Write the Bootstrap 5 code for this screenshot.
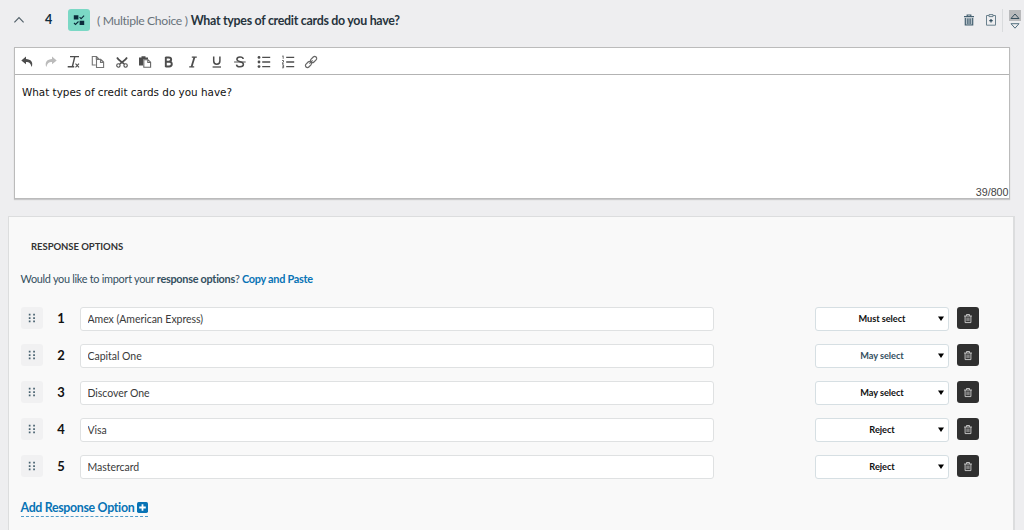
<!DOCTYPE html>
<html lang="en">
<head>
<meta charset="utf-8">
<meta name="viewport" content="width=device-width, initial-scale=1">
<title>Question editor</title>
<link href="https://cdn.jsdelivr.net/npm/bootstrap@5.3.0/dist/css/bootstrap.min.css" rel="stylesheet">
<style>
body{background:#eeeef0;font-family:Lato,"Open Sans",sans-serif;font-size:11px;line-height:16px;color:#34505f;height:530px;overflow:hidden}
svg{display:block;flex:none}
.q-head{height:47px;padding:0 3px 7px 13px}
.q-num{width:12px;margin-left:17.5px;font-size:12.5px;font-weight:700;color:#0f2d3e;text-align:center}
.q-type{width:22px;height:22px;margin-left:13px;border-radius:3px;background:#7bd8c5}
.q-kind{margin-left:7.500px;padding-top:1px;font-size:12.2px;letter-spacing:-.34px;color:#69737b;white-space:nowrap}
.q-title{margin-left:3px;padding-top:1px;font-size:12.4px;letter-spacing:-.28px;font-weight:700;color:#27343d;white-space:nowrap}
.q-sep{width:1px;height:23px;margin:0 6px 0 3px;background:#d9dbdd}
.q-up{width:12px;height:11px;background:#b9babc}
.editor{height:152px;margin:0 14px;border:1px solid #bbb;box-shadow:0 1px 1px #c8c8ca;background:#fff}
.tools{height:27px;padding:1px 0 0 5px;border-bottom:1px solid #b3b3b3;color:#4d4d4d}
.tools svg{margin-right:9.7px}
.entry{height:123px;padding:9px 7px 0;font-family:"DejaVu Sans",Verdana,sans-serif;font-size:10.4px;color:#111}
.counter{font-family:"Liberation Sans",Arial,sans-serif;font-size:10.7px;line-height:12px;color:#444;margin-right:-6.5px}
.panel{height:330px;margin:17px 9.5px 0 8px;padding:22px 30px 0 11.5px;border:1px solid #dcddde;border-right-width:2px;background:#f9f9f9}
.p-title{margin-left:10.5px;font-size:9.5px;letter-spacing:-.05px;font-weight:700;color:#333;line-height:16px}
.p-import{margin:16px 0 20px;height:16px;font-size:10.9px;letter-spacing:-.285px;white-space:nowrap}
.p-link{color:#0873b5;font-weight:700;text-decoration:none}
.opt{height:37px}
.grip{width:22px;height:22px;border-radius:3px;background:#f1f1f2;color:#47616f}
.opt-num{width:37px;line-height:22px;font-size:13px;font-weight:700;color:#111;text-align:center}
.opt .form-control{width:634px;height:24px;padding:0 7px 1px;font-size:10.5px;letter-spacing:-.03px;color:#3a3a3a;border:1px solid #dfe1e2;border-radius:3px;background:#fff}
.pick{width:134px;height:24px;margin-left:101px;padding:0 4px 1px 11px;border:1px solid #d6dfe3;border-radius:3px;background:#fff;color:#111;font-size:9.2px;letter-spacing:-.05px;font-weight:700}
.pick span{flex:1;text-align:center}
.pick.soft span{color:#34505f}
.del{width:22px;height:22px;margin-left:8px;border-radius:3px;background:#303030;color:#ddd;border:0;padding:0}
.add{margin-top:7px;color:#0873b5;font-size:12.4px;letter-spacing:-.33px;font-weight:700;line-height:17px;text-decoration:none;border-bottom:1px dashed #4f9ccb}
.add svg{margin-left:2.5px}
</style>
</head>
<body>
<svg width="0" height="0" class="position-absolute" aria-hidden="true">
  <symbol id="trash" viewBox="0 0 12 12"><g fill="none" stroke="currentColor"><path d="M1.3 3h9.4M4.2 2.8V1.2h3.6v1.6M2.5 3v7.9h7V3"/><path d="M4.7 4.8v4.4M6 4.8v4.4M7.3 4.8v4.4" stroke-width=".7"/></g></symbol>
  <symbol id="grip" viewBox="0 0 8 10"><path fill="currentColor" d="M.8.8h1.700v1.700H.8zM5.200.8h1.700v1.700H5.200zM.8 4.200h1.700v1.700H.8zM5.200 4.200h1.700v1.700H5.200zM.8 7.600h1.700v1.700H.8zM5.200 7.600h1.700v1.700H5.200z"/></symbol>
</svg>

<header class="q-head d-flex align-items-center">
  <svg width="12" height="8" viewBox="0 0 12 8" fill="none" stroke="#53616a" stroke-width="1.2"><path d="M1.400 6.400L6 1.700l4.600 4.700"/></svg>
  <span class="q-num">4</span>
  <span class="q-type d-flex align-items-center justify-content-center">
    <svg width="12" height="12" viewBox="0 0 12 12"><path fill="#0b2b3b" d="M.8 1.200h4.600v4.200H.8zM6.600 6.800h4.600v4.200H6.600z"/><path d="M6.600 3.200l1.500 1.500 3-3M1 9l1.500 1.500 3-3" fill="none" stroke="#0b2b3b" stroke-width="1.100"/></svg>
  </span>
  <span class="q-kind">( Multiple Choice )</span>
  <span class="q-title">What types of credit cards do you have?</span>
  <div class="ms-auto d-flex align-items-center">
    <svg width="12" height="12" viewBox="0 0 12 12" fill="none" stroke="#456071"><path d="M1 2.700h10M4.200 2.500V1h3.600v1.500" stroke-width="1.200"/><path d="M2.300 4v7h7.400V4" fill="#b5c1c9" stroke-width="1.200"/><path d="M4.600 4.500V10M6 4.500V10M7.400 4.500V10" stroke-width=".8"/></svg>
    <svg class="ms-2" width="16" height="12" viewBox="0 0 16 12" fill="none" stroke="#6b818e"><path d="M6 1.500H3.500v9.700h9V1.500H10"/><path d="M6 .6h4v2H6z"/><path d="M8 5v3.400M6.300 6.700h3.400" stroke="#2f4d5e" stroke-width="1.200"/></svg>
    <span class="q-sep"></span>
    <div>
      <div class="q-up d-flex align-items-center justify-content-center"><svg width="10" height="8" viewBox="0 0 10 8" fill="none" stroke="#38505e"><path d="M1 6.500L5 2l4 4.500z"/></svg></div>
      <svg class="mx-auto" width="10" height="9" viewBox="0 -2 10 9" fill="none" stroke="#53707f"><path d="M1 .7L5 5.200 9 .7z"/></svg>
    </div>
  </div>
</header>

<section class="editor">
  <div class="tools d-flex align-items-center">
    <svg width="14" height="14" viewBox="0 0 14 14"><path fill="currentColor" d="M6 1.500L1.300 5.400 6 9.300V7c3.200 0 4.600 1 5.600 5.100C13.700 7.200 10.700 4 6 3.900z"/></svg>
    <svg width="14" height="14" viewBox="0 0 14 14"><path fill="#bbb" d="M8 1.500l4.700 3.900L8 9.300V7c-3.200 0-4.600 1-5.600 5.100C.3 7.200 3.300 4 8 3.900z"/></svg>
    <svg width="14" height="14" viewBox="0 0 14 14" fill="none" stroke="currentColor"><path d="M3 1.600h9M7.800 1.600L5.400 11.500M.7 11.800h6.500" stroke-width="1.400"/><path d="M8.500 8.700l3.500 3.600M12 8.700L8.500 12.300" stroke-width="1.100"/></svg>
    <svg width="14" height="14" viewBox="0 0 14 14" fill="none" stroke="#757575" stroke-width="1.100"><path d="M4.800 10H1.300V1.500h4.200l2.300 2.400M5.300 1.500V4h2"/><path d="M5.500 4.400h4.200l2.900 2.700v5.400H5.500zM9.500 4.600v2.800h3"/></svg>
    <svg width="14" height="14" viewBox="0 0 14 14" fill="none" stroke="currentColor"><path d="M2 2.500c1.500 3 4.500 3.800 7.200 6.500M12 2.500c-1.500 3-4.500 3.800-7.200 6.500" stroke-width="1.700"/><circle cx="3.400" cy="10.500" r="1.700" stroke-width="1.100"/><circle cx="10.600" cy="10.500" r="1.700" stroke-width="1.100"/></svg>
    <svg width="14" height="14" viewBox="0 0 14 14"><path fill="currentColor" d="M1 2.500h2.500V1.200h4v1.300H10v2H5v6H1z"/><path d="M5.800 4.800H10l2.600 2.400v5.100H5.800zM9.800 5v2.500h2.500" fill="#fff" stroke="#666" stroke-width="1.100"/></svg>
    <svg width="14" height="14" viewBox="0 0 14 14" fill="none" stroke="currentColor" stroke-width="1.900"><path d="M3.500 2.500h3.200c3.300 0 3.300 4.200 0 4.200H3.500m0 0h3.600c3.600 0 3.600 4.800 0 4.800H3.500M3.800 2v10"/></svg>
    <svg width="14" height="14" viewBox="0 0 14 14" fill="none" stroke="currentColor"><path d="M5.800 2.100h5M3.200 11.900h5" stroke-width="1.300"/><path d="M8.500 2.100l-3 9.800" stroke-width="1.800"/></svg>
    <svg width="14" height="14" viewBox="0 0 14 14" fill="none" stroke="currentColor"><path d="M3.700 1.500v4.600c0 4.200 6.200 4.200 6.200 0V1.500" stroke-width="1.500"/><path d="M2.600 12h8.400" stroke-width="1.300"/></svg>
    <svg width="14" height="14" viewBox="0 0 14 14" fill="none" stroke="currentColor"><path d="M10.200 4C9.900 1.200 3.900 1.200 3.900 4.300c0 3.100 6.500 1.700 6.500 5 0 3.400-6.600 3.300-6.900.3" stroke-width="1.500"/><path d="M1.100 7h11.600"/></svg>
    <svg width="14" height="14" viewBox="0 0 14 14" fill="none" stroke="currentColor"><path d="M5.200 2.400h8M5.200 7h8M5.200 11.600h8" stroke-width="1.400"/><g fill="currentColor" stroke="none"><circle cx="2" cy="2.400" r="1.400"/><circle cx="2" cy="7" r="1.400"/><circle cx="2" cy="11.600" r="1.400"/></g></svg>
    <svg width="14" height="14" viewBox="0 0 14 14" fill="none" stroke="currentColor"><path d="M5.200 2.400h8M5.200 7h8M5.200 11.600h8" stroke-width="1.400"/><path d="M1.200 1.300l1-.5v3M1 5.500h1.500V7L1 8.300h1.800M1 9.800h1.600v3H1M1.300 11.300h1.300" stroke-width=".8"/></svg>
    <svg width="14" height="14" viewBox="0 0 14 14" fill="none" stroke="#666" stroke-width="1.200"><rect x="6.100" y="2.500" width="7" height="4" rx="2" transform="rotate(-45 9.600 4.500)"/><rect x="1" y="7.500" width="7" height="4" rx="2" transform="rotate(-45 4.500 9.500)"/><path d="M5.400 8.600l3.200-3.200"/></svg>
  </div>
  <div class="entry d-flex flex-column">
    <div>What types of credit cards do you have?</div>
    <div class="counter mt-auto align-self-end">39/800</div>
  </div>
</section>

<main class="panel">
  <div class="p-title">RESPONSE OPTIONS</div>
  <div class="p-import">Would you like to import your <b>response options</b>? <a class="p-link" href="#">Copy and Paste</a></div>

  <div class="opt d-flex align-items-start">
    <span class="grip d-flex align-items-center justify-content-center"><svg width="8" height="10"><use href="#grip"/></svg></span>
    <span class="opt-num">1</span>
    <input class="form-control" value="Amex (American Express)">
    <button class="pick d-flex align-items-center"><span>Must select</span><svg width="6" height="5" viewBox="0 0 6 5"><path d="M0 .5h6L3 5z"/></svg></button>
    <button class="del d-flex align-items-center justify-content-center"><svg width="10" height="11"><use href="#trash"/></svg></button>
  </div>
  <div class="opt d-flex align-items-start">
    <span class="grip d-flex align-items-center justify-content-center"><svg width="8" height="10"><use href="#grip"/></svg></span>
    <span class="opt-num">2</span>
    <input class="form-control" value="Capital One">
    <button class="pick soft d-flex align-items-center"><span>May select</span><svg width="6" height="5" viewBox="0 0 6 5"><path d="M0 .5h6L3 5z"/></svg></button>
    <button class="del d-flex align-items-center justify-content-center"><svg width="10" height="11"><use href="#trash"/></svg></button>
  </div>
  <div class="opt d-flex align-items-start">
    <span class="grip d-flex align-items-center justify-content-center"><svg width="8" height="10"><use href="#grip"/></svg></span>
    <span class="opt-num">3</span>
    <input class="form-control" value="Discover One">
    <button class="pick d-flex align-items-center"><span>May select</span><svg width="6" height="5" viewBox="0 0 6 5"><path d="M0 .5h6L3 5z"/></svg></button>
    <button class="del d-flex align-items-center justify-content-center"><svg width="10" height="11"><use href="#trash"/></svg></button>
  </div>
  <div class="opt d-flex align-items-start">
    <span class="grip d-flex align-items-center justify-content-center"><svg width="8" height="10"><use href="#grip"/></svg></span>
    <span class="opt-num">4</span>
    <input class="form-control" value="Visa">
    <button class="pick d-flex align-items-center"><span>Reject</span><svg width="6" height="5" viewBox="0 0 6 5"><path d="M0 .5h6L3 5z"/></svg></button>
    <button class="del d-flex align-items-center justify-content-center"><svg width="10" height="11"><use href="#trash"/></svg></button>
  </div>
  <div class="opt d-flex align-items-start">
    <span class="grip d-flex align-items-center justify-content-center"><svg width="8" height="10"><use href="#grip"/></svg></span>
    <span class="opt-num">5</span>
    <input class="form-control" value="Mastercard">
    <button class="pick d-flex align-items-center"><span>Reject</span><svg width="6" height="5" viewBox="0 0 6 5"><path d="M0 .5h6L3 5z"/></svg></button>
    <button class="del d-flex align-items-center justify-content-center"><svg width="10" height="11"><use href="#trash"/></svg></button>
  </div>

  <a class="add d-inline-flex align-items-center" href="#">Add Response Option<svg width="11" height="11" viewBox="0 0 10 10"><rect width="10" height="10" rx="1.500" fill="#0873b5"/><path d="M5 2v6M2 5h6" stroke="#fff" stroke-width="1.600"/></svg></a>
</main>
<script src="https://cdn.jsdelivr.net/npm/bootstrap@5.3.0/dist/js/bootstrap.bundle.min.js"></script>
</body>
</html>
